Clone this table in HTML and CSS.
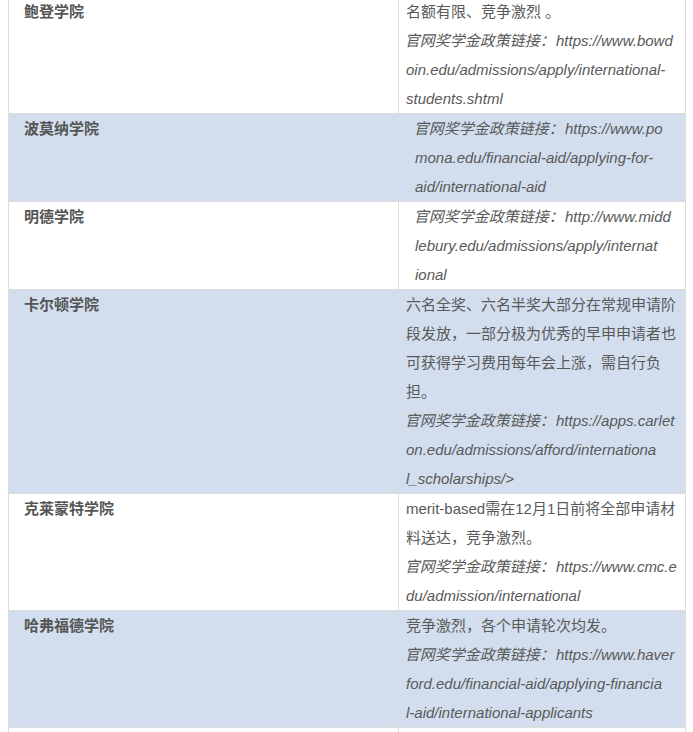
FILE: index.html
```html
<!DOCTYPE html>
<html lang="zh-CN">
<head>
<meta charset="utf-8">
<link rel="stylesheet" href="styles.css">
</head>
<body>
<table class="tbl">
  <colgroup><col class="c1"><col class="c2"></colgroup>
  <tr class="r-white">
    <td class="name">鲍登学院</td>
    <td class="info">名额有限、竞争激烈 。<br><span class="link"><span class="zh">官网奖学金政策链接：</span>https://www.bowd<br>oin.edu/admissions/apply/international-<br>students.shtml</span></td>
  </tr>
  <tr class="r-blue">
    <td class="name">波莫纳学院</td>
    <td class="info"><span class="link indent"><span class="zh">官网奖学金政策链接：</span>https://www.po<br>mona.edu/financial-aid/applying-for-<br>aid/international-aid</span></td>
  </tr>
  <tr class="r-white">
    <td class="name">明德学院</td>
    <td class="info"><span class="link indent"><span class="zh">官网奖学金政策链接：</span>http://www.midd<br>lebury.edu/admissions/apply/internat<br>ional</span></td>
  </tr>
  <tr class="r-blue">
    <td class="name">卡尔顿学院</td>
    <td class="info">六名全奖、六名半奖大部分在常规申请阶<br>段发放，一部分极为优秀的早申申请者也<br>可获得学习费用每年会上涨，需自行负<br>担。<br><span class="link"><span class="zh">官网奖学金政策链接：</span>https://apps.carlet<br>on.edu/admissions/afford/internationa<br>l_scholarships/&gt;</span></td>
  </tr>
  <tr class="r-white">
    <td class="name">克莱蒙特学院</td>
    <td class="info">merit-based需在12月1日前将全部申请材<br>料送达，竞争激烈。<br><span class="link"><span class="zh">官网奖学金政策链接：</span>https://www.cmc.e<br>du/admission/international</span></td>
  </tr>
  <tr class="r-blue">
    <td class="name">哈弗福德学院</td>
    <td class="info">竞争激烈，各个申请轮次均发。<br><span class="link"><span class="zh">官网奖学金政策链接：</span>https://www.haver<br>ford.edu/financial-aid/applying-financia<br>l-aid/international-applicants</span></td>
  </tr>
  <tr class="r-white">
    <td class="name">&nbsp;</td>
    <td class="info">&nbsp;</td>
  </tr>
</table>
</body>
</html>
```
FILE: styles.css
```css
html, body {
  margin: 0;
  padding: 0;
  background: #ffffff;
}
body {
  font-family: "Liberation Sans", "Noto Sans CJK SC", sans-serif;
  font-size: 15px;
  color: #595959;
  overflow: hidden;
}
.tbl {
  margin: -4px 0 0 8px;
  border-collapse: collapse;
  table-layout: fixed;
  width: 677px;
}
.c1 { width: 390px; }
.c2 { width: 287px; }
.tbl td {
  border: 1px solid #dcdcdc;
  vertical-align: top;
  padding: 0;
  line-height: 29px;
  white-space: nowrap;
}
.r-blue td { background: #d2deee; }
.r-white td { background: #ffffff; }
.name {
  padding-left: 15px !important;
  font-weight: bold;
  color: #555555;
}
.info {
  padding-left: 7px !important;
}
.link {
  font-style: italic;
}
.zh {
  display: inline-block;
  transform: skewX(-14deg);
  font-style: normal;
}
.indent {
  display: inline-block;
  padding-left: 9px;
}
```
